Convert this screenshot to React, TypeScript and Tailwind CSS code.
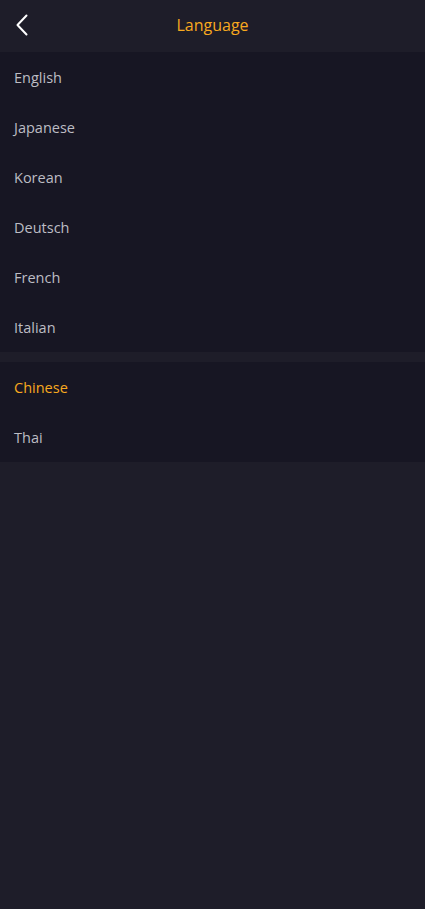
const groups = [
  ["English", "Japanese", "Korean", "Deutsch", "French", "Italian"],
  ["Chinese", "Thai"],
];

const active = "Chinese";

export default function App() {
  return (
    <div className="min-h-[909px] bg-[#1e1d29] font-['Open_Sans',sans-serif]">
      <div className="relative flex h-[52px] items-center justify-center">
        <button className="absolute left-[14px] top-[12px] text-white">
          <svg width="20" height="26" viewBox="0 0 20 26" fill="none">
            <path d="M12.5 3.5 L3.5 13 L12.5 22.5" stroke="white" strokeWidth="2" strokeLinecap="round" strokeLinejoin="round" />
          </svg>
        </button>
        <h1 className="pb-[2px] text-[16px] font-medium text-[#f8a91f]">Language</h1>
      </div>

      {groups.map((group, i) => (
        <div key={i} className={`bg-[#171623] ${i > 0 ? "mt-[10px]" : ""}`}>
          {group.map((lang) => (
            <div
              key={lang}
              className={`flex h-[50px] items-center px-[14px] pt-[2px] text-[14.5px] ${
                lang === active ? "text-[#f8a91f]" : "text-[#bdbdc4]"
              }`}
            >
              {lang}
            </div>
          ))}
        </div>
      ))}
    </div>
  );
}
